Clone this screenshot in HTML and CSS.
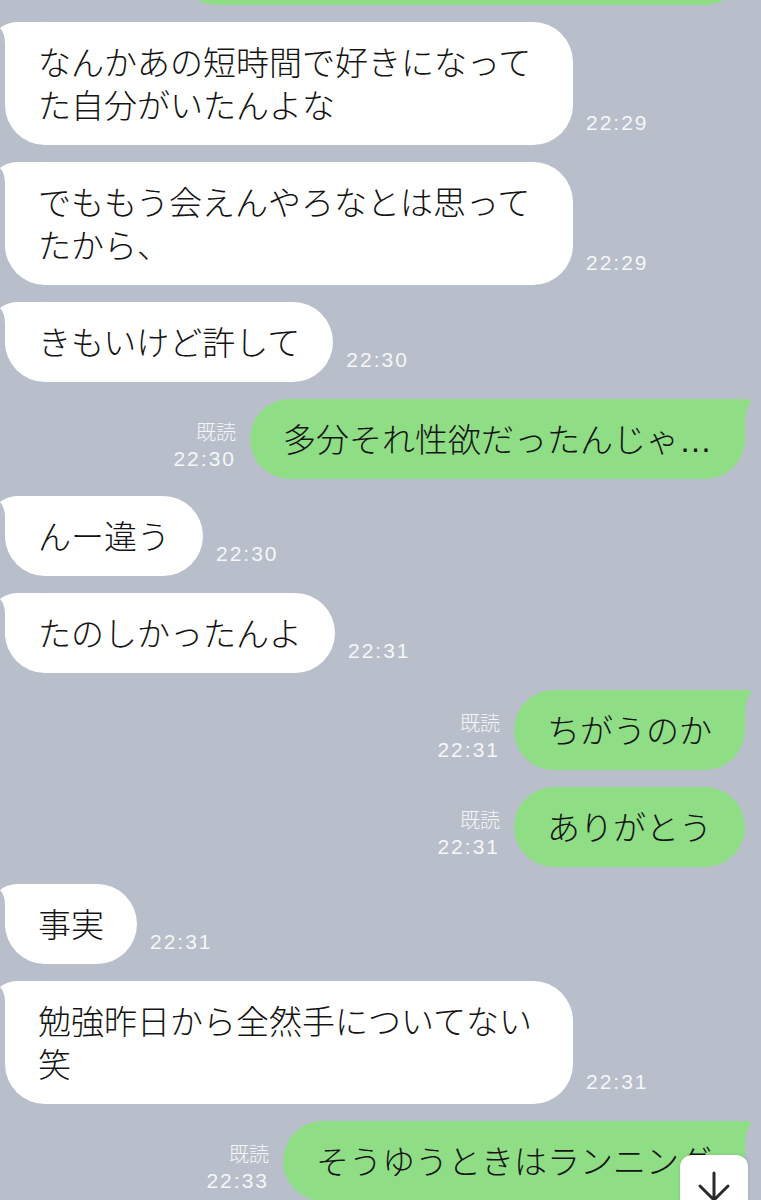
FILE: index.html
```html
<!DOCTYPE html>
<html lang="ja">
<head>
    <meta charset="UTF-8">
    <meta name="viewport" content="width=device-width, initial-scale=1.0">
    <title>トーク</title>
    <link rel="stylesheet" href="styles.css">
</head>
<body>
    <div class="chat">
        <div class="row out cut-row">
            <div class="bubble green cut"></div>
        </div>

        <div class="row in">
            <div class="bubble white tail">なんかあの短時間で好きになってた自分がいたんよな</div>
            <span class="time">22:29</span>
        </div>
        <div class="row in">
            <div class="bubble white tail">でももう会えんやろなとは思ってたから、</div>
            <span class="time">22:29</span>
        </div>
        <div class="row in">
            <div class="bubble white tail">きもいけど許して</div>
            <span class="time">22:30</span>
        </div>

        <div class="row out">
            <div class="meta"><span>既読</span><span class="num">22:30</span></div>
            <div class="bubble green tail">多分それ性欲だったんじゃ<span class="dots">…</span></div>
        </div>

        <div class="row in">
            <div class="bubble white tail">んー違う</div>
            <span class="time">22:30</span>
        </div>
        <div class="row in">
            <div class="bubble white tail">たのしかったんよ</div>
            <span class="time">22:31</span>
        </div>

        <div class="row out">
            <div class="meta"><span>既読</span><span class="num">22:31</span></div>
            <div class="bubble green tail">ちがうのか</div>
        </div>
        <div class="row out">
            <div class="meta"><span>既読</span><span class="num">22:31</span></div>
            <div class="bubble green">ありがとう</div>
        </div>

        <div class="row in">
            <div class="bubble white tail">事実</div>
            <span class="time">22:31</span>
        </div>
        <div class="row in">
            <div class="bubble white tail">勉強昨日から全然手についてない笑</div>
            <span class="time">22:31</span>
        </div>

        <div class="row out">
            <div class="meta"><span>既読</span><span class="num">22:33</span></div>
            <div class="bubble green tail">そうゆうときはランニング</div>
        </div>
    </div>

    <button class="scroll-down" type="button">
        <svg width="68" height="68" viewBox="0 0 68 68">
            <path d="M34 18 L34 46 M20 31 L34 45 L48 31" fill="none" stroke="#2a2a2a" stroke-width="3" stroke-linecap="round" stroke-linejoin="round"/>
        </svg>
    </button>
</body>
</html>
```

FILE: styles.css
```css
body {
    margin: 0;
    height: 1200px;
    overflow: hidden;
    background-color: #b9bfca;
    font-family: "Noto Sans CJK JP", "Noto Sans", sans-serif;
}

.chat {
    display: flex;
    flex-direction: column;
    gap: 17px;
}

.row {
    display: flex;
    align-items: flex-end;
}

.row.in {
    padding-left: 5px;
    gap: 13px;
}

.row.out {
    justify-content: flex-end;
    padding-right: 16px;
    gap: 14px;
}

.cut-row {
    margin-top: -75px;
}

.bubble {
    position: relative;
    isolation: isolate;
    max-width: 502px;
    padding: 18px 33px 19px;
    border-radius: 40px;
    font-size: 33px;
    font-weight: 300;
    line-height: 43px;
    color: #141414;
}

.white {
    background: #ffffff;
}

.green {
    background: #8fde86;
}

.cut {
    width: 520px;
    height: 43px;
}

.dots {
    font-family: "Liberation Sans", Arial, sans-serif;
    font-weight: 400;
    line-height: 0;
}

.tail::before {
    content: "";
    position: absolute;
    top: 0;
    width: 44px;
    height: 44px;
    background: inherit;
    z-index: -1;
}

.white.tail::before {
    left: -5px;
    clip-path: path("M44 0 L16 0 Q6 1 0 6 Q5 11 5 22 L5 44 L44 44 Z");
}

.green.tail::before {
    right: -7px;
    clip-path: path("M0 0 L28 0 Q38 0 44 1 Q38 8 37 22 L37 44 L0 44 Z");
}

.time {
    margin-bottom: 10px;
    font-family: "Liberation Sans", Arial, sans-serif;
    font-size: 21px;
    line-height: 24px;
    letter-spacing: 2px;
    color: rgba(255, 255, 255, 0.88);
}

.meta {
    display: flex;
    flex-direction: column;
    align-items: flex-end;
    margin-bottom: 7px;
    font-size: 20px;
    font-weight: 300;
    line-height: 27px;
    color: rgba(255, 255, 255, 0.88);
}

.meta .num {
    font-family: "Liberation Sans", Arial, sans-serif;
    font-size: 21px;
    font-weight: 400;
    letter-spacing: 2px;
}

.scroll-down {
    position: fixed;
    left: 680px;
    top: 1155px;
    width: 68px;
    height: 68px;
    padding: 0;
    border: none;
    border-radius: 12px;
    background: #ffffff;
    box-shadow: 0 0 4px rgba(0, 0, 0, 0.12);
}

.scroll-down svg {
    display: block;
}
```
